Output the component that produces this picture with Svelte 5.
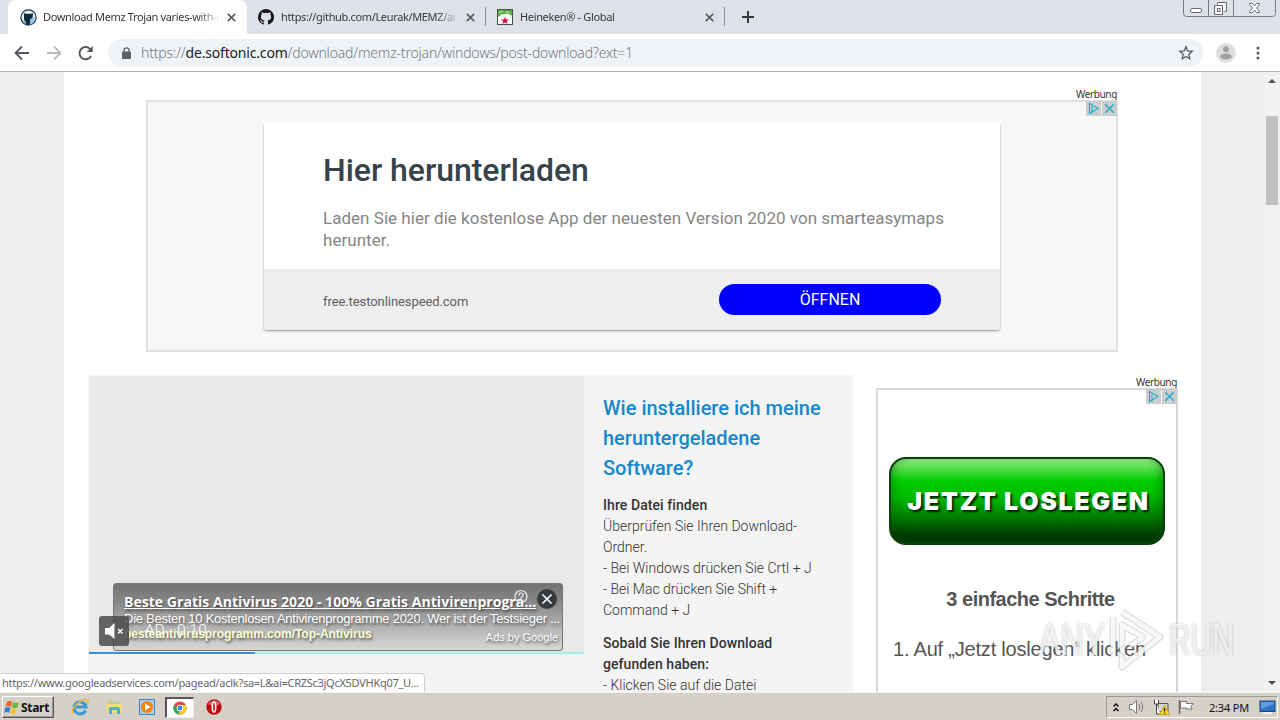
<script>
  const tabs = [
    { title: 'Download Memz Trojan varies-with-c', icon: 'softonic', active: true },
    { title: 'https://github.com/Leurak/MEMZ/arc', icon: 'github', active: false },
    { title: 'Heineken® - Global', icon: 'heineken', active: false }
  ];
  const played = 33.5;
</script>

{#snippet adMarks()}
  <div class="marks">
    <svg width="15" height="15" viewBox="0 0 15 15"><rect width="15" height="15" fill="#cbcdce" /><path d="M3.500 2.500v10l8.500-5zM6 5.500v7" fill="none" stroke="#2bb0ca" stroke-width="1.200" /></svg>
    <svg width="15" height="15" viewBox="0 0 15 15"><rect width="15" height="15" fill="#cbcdce" /><path d="M3.3 3.3l8.4 8.4M11.7 3.3l-8.4 8.4" stroke="#2bb0ca" stroke-width="1.6" /></svg>
  </div>
{/snippet}

<div class="screen">
  <header class="tabstrip">
    {#each tabs as tab}
      <div class="tab" class:active={tab.active}>
        {#if tab.icon === 'softonic'}
          <svg class="fav" width="17" height="17" viewBox="0 0 17 17"><circle cx="8.500" cy="8.500" r="7.600" fill="#e6f1fa" stroke="#1c303d" stroke-width="1.200" /><path d="M4 4.200q4.500 1.200 9 0l-.6 6-2.400 1.500v4H6v-3l-2-2z" fill="#10283a" /><path d="M10 10l5-2-2 6-3 2z" fill="#8fc2e8" /><path d="M3 11l3 1v3z" fill="#378bbd" /></svg>
        {:else if tab.icon === 'github'}
          <svg class="fav" width="16" height="16" viewBox="0 0 16 16"><path fill="#171717" d="M8 0a8 8 0 0 0-2.530 15.590c.4.070.55-.17.55-.38v-1.490c-2.010.37-2.530-.49-2.690-.94-.09-.23-.48-.94-.82-1.130-.28-.15-.68-.52-.01-.53.63-.01 1.080.58 1.230.82.72 1.210 1.870.87 2.330.66.07-.52.280-.87.51-1.070-1.780-.2-3.640-.89-3.640-3.950 0-.87.310-1.590.82-2.150-.08-.2-.36-1.020.08-2.120 0 0 .67-.21 2.200.82a7.600 7.600 0 0 1 4 0c1.530-1.040 2.200-.82 2.200-.82.44 1.100.160 1.920.08 2.120.51.56.82 1.270.82 2.150 0 3.070-1.870 3.750-3.650 3.950.29.25.54.73.54 1.480v2.200c0 .21.150.46.55.38A8 8 0 0 0 8 0" /></svg>
        {:else}
          <svg class="fav" width="16" height="16" viewBox="0 0 16 16"><rect x=".5" y=".5" width="15" height="15" fill="#fff" stroke="#3c5545" /><path d="M1 1h14v6Q8 2 1 8z" fill="#5cae43" /><path d="M2 4l4-2M9 3l4 1" stroke="#cbe6b5" /><path d="M8 8l1.200 2.500h2.800l-2.200 1.700.9 2.800L8 13.400 5.300 15l.9-2.800L4 10.500h2.800z" fill="#d9123f" /></svg>
        {/if}
        <span class="title">{tab.title}</span>
        <svg class="close" width="9" height="9" viewBox="0 0 9 9"><path d="M.8.8l7.400 7.400M8.200.8L.8 8.200" stroke="#5b5f64" stroke-width="1.700" /></svg>
      </div>
    {/each}
    <svg class="plus" width="12" height="12" viewBox="0 0 12 12"><path d="M6 0v12M0 6h12" stroke="#36393c" stroke-width="2" /></svg>
    <div class="winctl">
      <svg width="93" height="17" viewBox="0 0 93 17" fill="none" stroke="#686b73">
        <path d="M.5 0v13.500q0 3 3 3h86q3 0 3-3V0M25.500 0v16M50.500 0v16" stroke="#777a82" />
        <rect x="7.500" y="8.500" width="11" height="4" rx="1.500" fill="#fff" />
        <path d="M34.500 4.500V2.500h9v9h-2" fill="#fff" /><rect x="31.500" y="5.500" width="8" height="9" fill="#fff" /><rect x="34.500" y="8.500" width="2.500" height="3" />
        <path d="M66.500 3.500h3l2 2.500 2-2.500h3v1l-3 3.500 3 3.500v1h-3l-2-2.500-2 2.500h-3v-1l3-3.500-3-3.500z" fill="#fff" />
      </svg>
    </div>
  </header>

  <div class="toolbar">
    <svg class="nav" width="80" height="16" viewBox="0 0 80 16" fill="none" stroke-width="1.800">
      <path d="M15 8H2M8 1.500L1.500 8 8 14.500" stroke="#55585c" />
      <path d="M33 8h13M40 1.500L46.500 8 40 14.500" stroke="#b8babd" />
      <path d="M77 11A6.100 6.100 0 1 1 75.800 3.700L78 6" stroke="#55585c" stroke-width="2" /><path d="M78.700 1v6h-6z" fill="#55585c" />
    </svg>
    <div class="omnibox">
      <svg width="9" height="12" viewBox="0 0 9 12"><rect y="4.500" width="9" height="7.500" rx="1" fill="#5c6065" /><path d="M2 5V3.300a2.500 2.500 0 0 1 5 0V5" fill="none" stroke="#5c6065" stroke-width="1.300" /></svg>
      <span class="url">https://<b>de.softonic.com</b>/download/memz-trojan/windows/post-download?ext=1</span>
      <svg class="star" width="16" height="16" viewBox="0 0 16 16"><path d="M8 1.800l1.700 4.100 4.500.4-3.400 3 1 4.400L8 11.400l-3.800 2.300 1-4.400-3.400-3 4.500-.4z" fill="none" stroke="#55585c" stroke-width="1.300" /></svg>
    </div>
    <svg class="avatar" width="20" height="20" viewBox="0 0 20 20"><circle cx="10" cy="10" r="10" fill="#dedede" /><circle cx="10" cy="6.300" r="3" fill="#a0a0a0" /><ellipse cx="10" cy="13.500" rx="5.800" ry="3" fill="#a0a0a0" /></svg>
    <svg class="dots" width="4" height="14" viewBox="0 0 4 14" fill="#55585c"><circle cx="2" cy="2" r="1.500" /><circle cx="2" cy="7" r="1.500" /><circle cx="2" cy="12" r="1.500" /></svg>
  </div>

  <div class="viewport">
    <main>
      <section class="banner">
        <p class="label">Werbung</p>
        <div class="frame">
          {@render adMarks()}
          <div class="card">
            <div class="copy">
              <h1>Hier herunterladen</h1>
              <p>Laden Sie hier die kostenlose App der neuesten Version 2020 von smarteasymaps<br />herunter.</p>
            </div>
            <div class="foot">
              <span class="host">free.testonlinespeed.com</span>
              <button>ÖFFNEN</button>
            </div>
          </div>
        </div>
      </section>

      <div class="columns">
        <div class="player-col">
          <div class="player">
            <div class="overlay">
              <strong class="o-title">Beste Gratis Antivirus 2020 - 100% Gratis Antivirenprogra...</strong>
              <span class="o-text">Die Besten 10 Kostenlosen Antivirenprogramme 2020. Wer ist der Testsieger ...</span>
              <strong class="o-url">besteantivirusprogramm.com/Top-Antivirus</strong>
              <span class="o-by">Ads by Google</span>
              <svg class="o-icons" width="45" height="22" viewBox="0 0 45 22"><circle cx="8" cy="8.500" r="6" fill="none" stroke="#eee" stroke-width="1.200" /><path d="M5.800 7.500q0-2.500 2.200-2.500t2.200 2q0 1.200-2.200 2.500v1M8 11.500v1" fill="none" stroke="#eee" stroke-width="1.200" /><circle cx="34" cy="11" r="10" fill="#373b3e" /><path d="M29.500 6.500l9 9M38.500 6.500l-9 9" stroke="#fff" stroke-width="1.600" /></svg>
            </div>
            <div class="mute"><svg width="30" height="30" viewBox="0 0 30 30"><path d="M6 12h4l5.500-5v16L10 18.500H6z" fill="#fff" /><path d="M19 13l4.500 4.500M23.500 13L19 17.500" stroke="#fff" stroke-width="1.400" /></svg></div>
            <span class="count">AD · 0:10</span>
            <div class="progress"><i style:width="{played}%"></i></div>
          </div>
        </div>

        <article>
          <h2>Wie installiere ich meine heruntergeladene Software?</h2>
          <p><b>Ihre Datei finden</b><br />Überprüfen Sie Ihren Download-<br />Ordner.<br />- Bei Windows drücken Sie Crtl + J<br />- Bei Mac drücken Sie Shift +<br />Command + J</p>
          <p><b>Sobald Sie Ihren Download<br />gefunden haben:</b><br />- Klicken Sie auf die Datei</p>
        </article>

        <aside>
          <p class="label">Werbung</p>
          <div class="tall">
            {@render adMarks()}
            <div class="green">JETZT LOSLEGEN</div>
            <p class="steps">3 einfache Schritte</p>
            <p class="one">1. Auf „Jetzt loslegen“ klicken</p>
          </div>
        </aside>
      </div>
    </main>
    <div class="scrollbar">
      <i class="up"></i>
      <i class="thumb"></i>
      <i class="down"></i>
    </div>
    <div class="status">https://www.googleadservices.com/pagead/aclk?sa=L&amp;ai=CRZSc3jQcX5DVHKq07_U...</div>
  </div>

  <div class="watermark">
    <span>ANY</span>
    <svg width="58" height="66" viewBox="0 0 58 66" fill="none" stroke-linejoin="round">
      <g stroke="#909090" stroke-opacity=".3" stroke-width="7"><path d="M15 5l38 25-38 30V18l21 12-13 9" /><path d="M6 10v40" /></g>
      <g stroke="#fff" stroke-opacity=".8" stroke-width="4.500"><path d="M15 5l38 25-38 30V18l21 12-13 9" /><path d="M6 10v40" /></g>
    </svg>
    <span class="run">RUN</span>
  </div>

  <footer class="taskbar">
    <div class="start">
      <svg width="16" height="15" viewBox="0 0 16 15"><path d="M3 2q3-2 5 0L7 7Q4 5 1.500 7z" fill="#e96528" /><path d="M9 2.300q3 1.500 6 0L13.500 7.500q-3 1.500-5.500 0z" fill="#70b843" /><path d="M1 8q3-2 5.500 0L5 13Q2.500 11 0 13z" fill="#3b83cf" /><path d="M7.500 8.500q3 1.500 5.500 0L11.500 13.500Q9 15 6 13z" fill="#f7c52d" /></svg>
      <b>Start</b>
    </div>
    <div class="quick">
      <svg width="18" height="18" viewBox="0 0 18 18"><path d="M14.500 12.500A6 6 0 1 1 15 9H5" fill="none" stroke="#349bdc" stroke-width="3" /><path d="M2 16C-2 10 13-1 17 2q1 1-1 4" fill="none" stroke="#e5b839" stroke-width="1.500" /></svg>
      <svg width="18" height="18" viewBox="0 0 18 18"><path d="M2 3h5l1 2h8v10H2z" fill="#e9ce6a" /><path d="M4 2h4l1 2h6v3H4z" fill="#b2d49a" /><path d="M1 6h16v9H1z" fill="#f1da7c" /><path d="M4 16v-5q0-2 2-2h7q2 0 2 2v5h-3v-4H7v4z" fill="#4fabdc" /></svg>
      <svg width="18" height="18" viewBox="0 0 18 18"><rect x="1.500" y="1.500" width="15" height="15" fill="#a9cce9" stroke="#4189c6" /><circle cx="9" cy="9" r="6" fill="#f28314" /><path d="M7 5.500v7l5.500-3.500z" fill="#fff" /></svg>
      <div class="pressed"><svg width="14" height="14" viewBox="0 0 16 16"><circle cx="8" cy="8" r="7.500" fill="#e5443a" /><path d="M8 8L1.300 4.300A7.500 7.500 0 0 0 7 15.400z" fill="#35a456" /><path d="M8 8h7.500A7.500 7.500 0 0 1 7 15.400z" fill="#fbcb20" /><path d="M8 4.500h6.600q1 1.800.9 3.500H8z" fill="#fbcb20" /><circle cx="8" cy="8" r="3.700" fill="#fff" /><circle cx="8" cy="8" r="2.800" fill="#4285e8" /></svg></div>
      <svg width="18" height="18" viewBox="0 0 18 18"><circle cx="9" cy="9" r="7.700" fill="#b70d12" /><path d="M3 6a7 7 0 0 1 12 0q-6 4-12 0" fill="#df6667" /><ellipse cx="9" cy="9" rx="1.700" ry="5" fill="#c7221f" stroke="#fff" stroke-width="1.500" /></svg>
    </div>
    <div class="tray">
      <svg width="8" height="11" viewBox="0 0 8 11"><path d="M1.500 4.500L4 2l2.500 2.500M1.500 9L4 6.500 6.500 9" fill="none" stroke="#111" stroke-width="1.500" /></svg>
      <svg width="17" height="16" viewBox="0 0 17 16" fill="none" stroke="#76767a"><path d="M1.500 5.500h3l4-4v13l-4-4h-3z" fill="#fff" /><path d="M11 5q2 3 0 6M13 3q3.500 5 0 10" /></svg>
      <svg width="17" height="16" viewBox="0 0 17 16"><path d="M5 4.500h10v8H5z" fill="#d8d8d8" stroke="#555" /><path d="M1.500 1v4h4V1M3.500 5v10h4" fill="#fff" stroke="#444" /><path d="M11.500 6l5 9.500h-10z" fill="#ffd91c" stroke="#bb9310" stroke-width=".7" /><path d="M11.500 9v3.500M11.500 13.500v1" stroke="#111" stroke-width="1.300" /></svg>
      <svg width="17" height="16" viewBox="0 0 17 16"><path d="M1.500 1v14" stroke="#666" stroke-width="1.500" /><path d="M2.500 2.500h6v2h6.500l-2 3 1 2.500H8.500V9h-6z" fill="#fff" stroke="#777" /></svg>
      <span>2:34 PM</span>
      <svg class="desk" width="17" height="14" viewBox="0 0 17 14"><rect x="1" y="1" width="15" height="10.500" fill="#2e76c5" stroke="#1b477c" /><path d="M2 2h13v2L2 9z" fill="#619cdd" /><path d="M4 13h9" stroke="#eee" stroke-width="2" /></svg>
    </div>
  </footer>
</div>

<style>
  :global(body) { margin: 0; overflow: hidden; }
  * { box-sizing: border-box; }
  p, h1, h2 { margin: 0; }
  svg { display: block; flex: none; }
  .screen {
    position: relative;
    width: 1280px;
    height: 720px;
    display: flex;
    flex-direction: column;
    overflow: hidden;
    background: #fff;
    color: #333;
    font-family: "Noto Sans", sans-serif;
    white-space: nowrap;
  }

  .tabstrip { height: 34px; display: flex; background: #dee1e8; padding-left: 8px; flex: none; }
  .tab { width: 239px; height: 34px; display: flex; align-items: center; padding: 0 11px; }
  .tab.active { width: 239px; padding-left: 12px; border-radius: 8px 8px 0 0; }
  .tab:nth-child(n + 2) { background: linear-gradient(#8d9096, #8d9096) right 7px / 1px 19px no-repeat; }
  .tab.active { background: #fff; }
  .fav { margin-right: 6px; }
  .tab:not(.active) .fav { margin-right: 7px; }
  .title {
    width: 179px;
    overflow: hidden;
    font-size: 11px;
    line-height: 18px;
    letter-spacing: -0.35px;
    color: #35383c;
    mask-image: linear-gradient(90deg, #000 155px, transparent 178px);
  }
  .close { margin-left: 8px; }
  .plus { margin: 11px 0 0 17px; }
  .winctl { margin: 0 0 0 429px; }

  .toolbar { height: 38px; display: flex; align-items: center; border-bottom: 1px solid #aeb0b1; flex: none; padding-left: 14px; }
  .omnibox { width: 1095px; height: 28px; margin-left: 14px; padding: 0 9px 0 14px; display: flex; align-items: center; border-radius: 14px; background: #f0f3f6; }
  .url { margin-left: 10px; font-size: 14px; line-height: 20px; color: #74797f; font-weight: 300; letter-spacing: -0.18px; }
  .url b { font-weight: 400; color: #202326; }
  .star { margin-left: auto; }
  .avatar { margin-left: 13px; }
  .dots { margin-left: 20px; }

  .viewport { position: relative; height: 620px; flex: none; display: flex; background: #eee; padding-left: 64px; overflow: hidden; }
  main { width: 1137px; background: #fff; padding-top: 16px; }
  .label { font-size: 10px; line-height: 12px; text-align: right; color: #333; letter-spacing: -0.35px; }
  .banner { width: 972px; margin-left: 82px; }
  .banner .label { padding-right: 1px; }
  .frame { position: relative; height: 252px; border: 2px solid #e0e0e0; background: #f7f7f7; padding: 20px 0 0 116px; }
  .marks { position: absolute; top: -1px; right: -1px; display: flex; gap: 1px; }
  .card { width: 736px; height: 208px; border-radius: 3px; background: #fff; overflow: hidden; box-shadow: 0 1px 2px rgba(0, 0, 0, 0.4); font-family: Roboto, sans-serif; }
  .copy { height: 147px; padding: 28px 0 0 59px; }
  h1 { font-size: 32px; line-height: 40px; font-weight: 500; color: #37434a; letter-spacing: -0.04px; }
  .copy p { margin-top: 17px; font-size: 17px; line-height: 22px; color: #858585; letter-spacing: 0.03px; }
  .foot { height: 61px; background: #eee; display: flex; justify-content: space-between; align-items: center; padding: 0 59px; }
  .host { font-size: 13px; color: #606060; padding-top: 3px; letter-spacing: -0.08px; }
  button { width: 222px; height: 31px; border: 0; border-radius: 16px; background: #00f; color: #fff; font: 400 16px/31px Roboto, sans-serif; padding: 0; }

  .columns { display: flex; margin: 23px 0 0 24px; }
  .player-col { width: 497px; height: 317px; background: #f4f4f4; padding: 1px 0 0 1px; }
  .player { position: relative; width: 495px; height: 278px; background: #e9e9e9; }
  .overlay { position: absolute; left: 24px; top: 207px; width: 450px; height: 68px; border: 1px solid #7a7676; border-radius: 3px; background: linear-gradient(#727272, #868686 25%, #cecece 90%, #d4d4d4); padding: 9px 0 0 10px; color: #fff; display: flex; flex-direction: column; font-family: "Liberation Sans", sans-serif; text-shadow: 1px 2px 3px rgba(0, 0, 0, 0.6); }
  .o-title { font: 700 14px/17px "Open Sans", sans-serif; letter-spacing: 0.04px; text-decoration: underline; }
  .o-text { font-size: 13px; line-height: 18px; letter-spacing: -0.26px; }
  .o-url { font-size: 12px; line-height: 13px; color: #fdffd0; letter-spacing: -0.04px; }
  .o-by { position: absolute; right: 4px; bottom: 6px; font-size: 11px; line-height: 14px; }
  .o-icons { position: absolute; top: 4px; right: 4px; }
  .mute { position: absolute; left: 10px; top: 240px; width: 30px; height: 30px; border-radius: 3px; background: rgba(70, 70, 70, 0.82); }
  .count { position: absolute; left: 56px; top: 245px; font: 300 15px/18px Roboto, sans-serif; letter-spacing: 0.4px; color: #fff; }
  .progress { position: absolute; left: 0; bottom: 0; width: 495px; height: 2px; background: #a2efec; }
  .progress i { display: block; height: 2px; background: #3b91d6; }

  article { width: 268px; height: 317px; overflow: hidden; background: #f4f4f4; padding: 18px 0 0 18px; font-family: Roboto, sans-serif; }
  h2 { width: 225px; white-space: normal; font-size: 20px; line-height: 30px; font-weight: 500; color: #1687c9; }
  article p { font-size: 14px; line-height: 21px; font-weight: 300; color: #333; margin-top: 12px; }
  article b { font-weight: 500; letter-spacing: 0.08px; }

  aside { width: 302px; height: 317px; margin-left: 23px; padding-top: 1px; }
  aside .label { padding-right: 1px; }
  .tall { position: relative; height: 304px; border: 2px solid #d7d7d7; border-bottom: 0; display: flex; flex-direction: column; align-items: center; font-family: "Liberation Sans", sans-serif; color: #555; }
  .green { width: 276px; height: 88px; margin-top: 67px; border: 2px solid #07420a; border-radius: 17px; background: linear-gradient(#91ee86 0, #47da3e 14%, #00cf00 26%, #00b900 46%, #007b00 70%, #003d00 90%, #003900); box-shadow: inset 7px 0 8px -4px rgba(0, 65, 0, 0.35), inset -7px 0 8px -4px rgba(0, 65, 0, 0.35); color: #fff; font: 900 25px/84px Inter, sans-serif; letter-spacing: 1.65px; padding-left: 3px; text-align: center; text-shadow: 2px 2px 2px rgba(0, 0, 0, 0.8); }
  .steps { margin-top: 42px; font-size: 20px; line-height: 24px; font-weight: 700; letter-spacing: -0.5px; padding-left: 7px; }
  .one { align-self: flex-start; margin: 26px 0 0 15px; font-size: 20px; line-height: 24px; letter-spacing: -0.2px; }

  .scrollbar { width: 16px; margin-left: auto; background: #f1f1f1; display: flex; flex-direction: column; align-items: center; }
  .up { margin-top: 7px; border: 4px solid transparent; border-top: 0; border-bottom-color: #4c4f52; }
  .thumb { width: 12px; height: 89px; margin-top: 33px; background: #c2c2c2; }
  .down { margin: auto 0 7px; border: 4px solid transparent; border-bottom: 0; border-top-color: #4c4f52; }
  .status { position: absolute; left: 0; bottom: 0; width: 425px; height: 19px; padding-left: 2px; border: 1px solid #d0d0d0; border-width: 1px 1px 0 0; border-radius: 0 4px 0 0; background: #fff; font-size: 11px; line-height: 18px; color: #666; letter-spacing: -0.28px; }

  .watermark { position: absolute; left: 1039px; top: 607px; display: flex; align-items: center; height: 66px; font-family: "Liberation Sans", sans-serif; font-size: 44px; color: rgba(255, 255, 255, 0.75); -webkit-text-stroke: 1px rgba(255, 255, 255, 0.5); text-shadow: 0 0 3px rgba(90, 90, 90, 0.55); }
  .watermark span { width: 67px; transform: scaleX(0.73); transform-origin: left; }
  .watermark .run { transform: scaleX(0.68); }
  .watermark svg { margin: 0 4px 0 1px; }

  .taskbar { height: 28px; flex: none; display: flex; align-items: center; background: #d5d0c8; border-top: 1px solid #f5f4f1; padding: 2px 2px 1px; }
  .start { width: 52px; height: 22px; display: flex; align-items: center; gap: 1px; border: 1px solid; border-color: #fff #555 #555 #fff; box-shadow: inset -1px -1px #999; color: #111; font-size: 12px; padding-left: 1px; }
  .start b { letter-spacing: -0.3px; }
  .quick { display: flex; align-items: center; margin-left: 17px; gap: 15.500px; }
  .pressed { width: 29px; height: 21px; margin: 0 -5px 0 -7px; display: grid; place-items: center; background: #fff; border: 1px solid #eee; border-width: 2px 1px 1px 2px; border-top-color: #555; border-left-color: #555; }
  .pressed + svg { margin-left: 1px; }
  .tray { width: 172px; height: 22px; margin-left: auto; display: flex; align-items: center; border: 1px solid; border-color: #999 #fff #fff #999; padding: 0 1px 0 5px; gap: 8px; font-size: 11px; color: #111; }
  .tray span { margin-left: 6px; letter-spacing: -0.2px; }
  .desk { margin-left: auto; }
</style>
